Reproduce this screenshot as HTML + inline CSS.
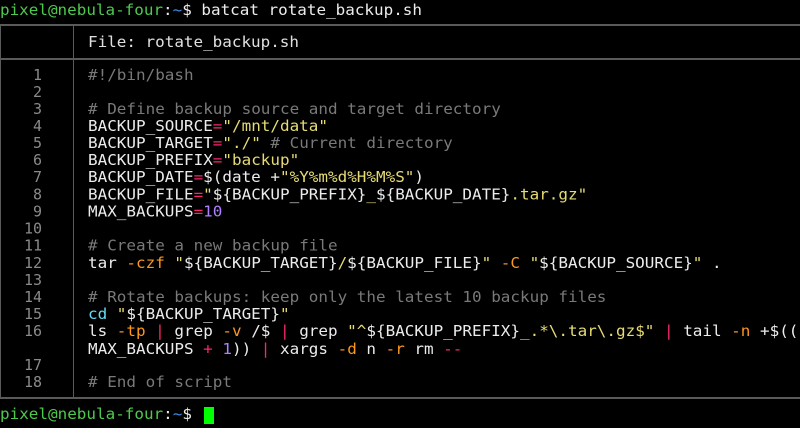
<!DOCTYPE html>
<html><head><meta charset="utf-8"><style>
html,body{margin:0;padding:0;background:#000;width:800px;height:428px;overflow:hidden}
svg{position:absolute;left:0;top:0}
text{font-family:"DejaVu Sans Mono","Liberation Mono","Courier New",monospace;font-size:15px;fill:#ececec;white-space:pre}
.g{fill:#4ec94e}.b{fill:#3b8eea}.n{fill:#8a8a8a}
.c{fill:#797979}.s{fill:#e6db74}.o{fill:#f92672}.p{fill:#ae81ff}.f{fill:#fd971f}.k{fill:#66d9ef}
</style></head><body>
<svg width="800" height="428" xmlns="http://www.w3.org/2000/svg">
<rect x="0" y="24" width="800" height="2" fill="#5a5a5a"/>
<rect x="0" y="58" width="800" height="2" fill="#5a5a5a"/>
<rect x="0" y="397" width="800" height="2" fill="#5a5a5a"/>
<rect x="73" y="25" width="1" height="373" fill="#5a5a5a"/>
<rect x="0" y="25" width="1" height="373" fill="#5a5a5a"/>
<rect x="204" y="407" width="10" height="17" fill="#00ff00"/>

<text x="0" y="15" textLength="422" lengthAdjust="spacingAndGlyphs"><tspan class="g">pixel@nebula-four</tspan>:<tspan class="b">~</tspan>$ batcat rotate_backup.sh</text>
<text x="88" y="47" textLength="211" lengthAdjust="spacingAndGlyphs" style="fill:#e0e0e0">File: rotate_backup.sh</text>

<g text-anchor="end">
<text class="n" x="42" y="80">1</text>
<text class="n" x="42" y="97">2</text>
<text class="n" x="42" y="114">3</text>
<text class="n" x="42" y="131">4</text>
<text class="n" x="42" y="148">5</text>
<text class="n" x="42" y="165">6</text>
<text class="n" x="42" y="182">7</text>
<text class="n" x="42" y="199.5">8</text>
<text class="n" x="42" y="216.5">9</text>
<text class="n" x="42" y="233.5">10</text>
<text class="n" x="42" y="250.5">11</text>
<text class="n" x="42" y="268">12</text>
<text class="n" x="42" y="285">13</text>
<text class="n" x="42" y="302">14</text>
<text class="n" x="42" y="319">15</text>
<text class="n" x="42" y="336">16</text>
<text class="n" x="42" y="370">17</text>
<text class="n" x="42" y="387">18</text>
</g>

<text x="88" y="80" textLength="105.6" lengthAdjust="spacingAndGlyphs"><tspan class="c">#!/bin/bash</tspan></text>
<text x="88" y="114" textLength="412.8" lengthAdjust="spacingAndGlyphs"><tspan class="c"># Define backup source and target directory</tspan></text>
<text x="88" y="131" textLength="240" lengthAdjust="spacingAndGlyphs">BACKUP_SOURCE<tspan class="o">=</tspan><tspan class="s">"/mnt/data"</tspan></text>
<text x="88" y="148" textLength="364.8" lengthAdjust="spacingAndGlyphs">BACKUP_TARGET<tspan class="o">=</tspan><tspan class="s">"./"</tspan> <tspan class="c"># Current directory</tspan></text>
<text x="88" y="165" textLength="211.2" lengthAdjust="spacingAndGlyphs">BACKUP_PREFIX<tspan class="o">=</tspan><tspan class="s">"backup"</tspan></text>
<text x="88" y="182" textLength="336" lengthAdjust="spacingAndGlyphs">BACKUP_DATE<tspan class="o">=</tspan>$(date +<tspan class="s">"%Y%m%d%H%M%S"</tspan>)</text>
<text x="88" y="199.5" textLength="499.2" lengthAdjust="spacingAndGlyphs">BACKUP_FILE<tspan class="o">=</tspan><tspan class="s">"</tspan>${BACKUP_PREFIX}<tspan class="s">_</tspan>${BACKUP_DATE}<tspan class="s">.tar.gz"</tspan></text>
<text x="88" y="216.5" textLength="134.4" lengthAdjust="spacingAndGlyphs">MAX_BACKUPS<tspan class="o">=</tspan><tspan class="p">10</tspan></text>
<text x="88" y="250.5" textLength="249.6" lengthAdjust="spacingAndGlyphs"><tspan class="c"># Create a new backup file</tspan></text>
<text x="88" y="268" textLength="633.6" lengthAdjust="spacingAndGlyphs">tar <tspan class="f">-czf</tspan> <tspan class="s">"</tspan>${BACKUP_TARGET}<tspan class="s">/</tspan>${BACKUP_FILE}<tspan class="s">"</tspan> <tspan class="f">-C</tspan> <tspan class="s">"</tspan>${BACKUP_SOURCE}<tspan class="s">"</tspan> .</text>
<text x="88" y="302" textLength="518.4" lengthAdjust="spacingAndGlyphs"><tspan class="c"># Rotate backups: keep only the latest 10 backup files</tspan></text>
<text x="88" y="319" textLength="201.6" lengthAdjust="spacingAndGlyphs"><tspan class="k">cd</tspan> <tspan class="s">"</tspan>${BACKUP_TARGET}<tspan class="s">"</tspan></text>
<text x="88" y="336" textLength="710.4" lengthAdjust="spacingAndGlyphs">ls <tspan class="f">-tp</tspan> <tspan class="o">|</tspan> grep <tspan class="f">-v</tspan> /$ <tspan class="o">|</tspan> grep <tspan class="s">"^</tspan>${BACKUP_PREFIX}<tspan class="s">_.*\.tar\.gz$"</tspan> <tspan class="o">|</tspan> tail <tspan class="f">-n</tspan> +$((</text>
<text x="88" y="354" textLength="374.4" lengthAdjust="spacingAndGlyphs">MAX_BACKUPS <tspan class="o">+</tspan> <tspan class="p">1</tspan>)) <tspan class="o">|</tspan> xargs <tspan class="f">-d</tspan> n <tspan class="f">-r</tspan> rm <tspan class="o">--</tspan></text>
<text x="88" y="387" textLength="144" lengthAdjust="spacingAndGlyphs"><tspan class="c"># End of script</tspan></text>

<text x="0" y="419" textLength="192" lengthAdjust="spacingAndGlyphs"><tspan class="g">pixel@nebula-four</tspan>:<tspan class="b">~</tspan>$</text>
</svg>
</body></html>
